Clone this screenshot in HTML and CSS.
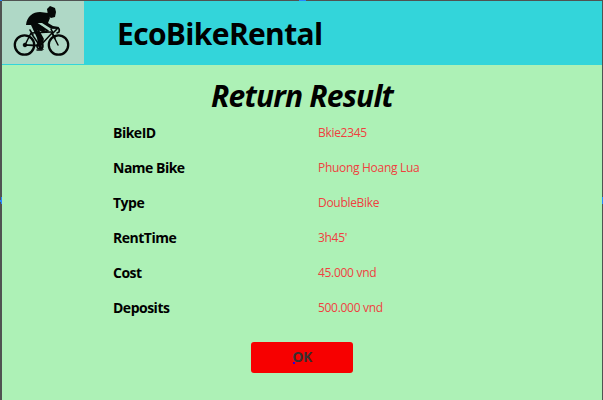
FILE: index.html
```html
<!DOCTYPE html>
<html lang="en">
<head>
<meta charset="utf-8">
<title>EcoBikeRental</title>
<link rel="stylesheet" href="styles.css">
</head>
<body>
<main class="window">
  <i class="handle top-left"></i><i class="handle top"></i><i class="handle left"></i><i class="handle left-tick"></i><i class="handle right"></i>
  <header class="header">
    <div class="logo">
      <svg viewBox="0 0 82 63" width="82" height="63" fill="none" stroke="#050807" stroke-linecap="round" stroke-linejoin="round">
        <g stroke-width="2.3"><circle cx="22.5" cy="44" r="9.7"/><circle cx="56.5" cy="44" r="9.7"/></g>
        <path stroke-width="1.5" d="M23 44l6-12 9 13zM38 45l12-13 6 12M29 32l20-1M28 29l3 5"/>
        <path stroke-width="1.6" d="M49 28l2 4 4-4M50 27h6q2 1 1 4l-2 1M50 32l3 5"/>
        <path stroke-width="1" d="M23 44h14"/>
        <circle cx="23" cy="44" r="1.8" fill="#050807"/><circle cx="38" cy="45" r="3" stroke-width="1.5"/>
        <path stroke-width="1.5" d="M35 49h5"/>
        <path fill="#050807" stroke="none" d="M24 24C25 15 31 11 38 11l8 1 2 5-2 5 5 3 6 1-1 2-8-1-8-5-6 0 7 4 3 3-3 2-6-2 6 8-2 8 3 4-5-1-2-11-6-13z"/>
        <path stroke-width="1.7" d="M34 22l12 8-6 1M36 29l5 9-1 8"/>
        <path fill="#050807" stroke="none" d="M45 8l3-3 5 2 1 4-1 5-4 1-3-2z"/>
      </svg>
    </div>
    <h1 class="brand">EcoBikeRental</h1>
  </header>
  <section class="content">
    <h2 class="title">Return Result</h2>
    <dl class="details">
      <dt>BikeID</dt><dd>Bkie2345</dd>
      <dt>Name Bike</dt><dd>Phuong Hoang Lua</dd>
      <dt>Type</dt><dd>DoubleBike</dd>
      <dt>RentTime</dt><dd>3h45'</dd>
      <dt>Cost</dt><dd>45.000 vnd</dd>
      <dt>Deposits</dt><dd>500.000 vnd</dd>
    </dl>
    <button class="ok">OK</button>
  </section>
</main>
</body>
</html>
```
FILE: styles.css
```css
* { box-sizing: border-box; }
body { margin: 0; font-family: "Open Sans", "Noto Sans", sans-serif; }
.window {
  position: relative;
  height: 400px;
  border: solid #505352;
  border-width: 1px 1px 0 2px;
  background: #adf1b6;
}
.header { display: flex; height: 64px; background: #33d5da; }
.logo { width: 82px; height: 63px; background: #afd8c6; }
.logo svg { display: block; }
.brand { margin: 11px 0 0 33px; font-size: 30px; line-height: 44px; letter-spacing: -0.65px; color: #000; }
.content { display: flex; flex-direction: column; }
.title { margin: 9px 0 0 209px; font-size: 30px; line-height: 44px; font-style: italic; letter-spacing: -0.8px; white-space: nowrap; color: #000; }
.details { display: grid; grid-template-columns: 205px 1fr; grid-auto-rows: 35px; margin: -3px 0 0 111px; align-items: center; }
.details dt { font-size: 14px; font-weight: 700; line-height: 20px; letter-spacing: -0.5px; color: #000; }
.details dd { margin: 0; font-size: 12px; line-height: 20px; letter-spacing: -0.3px; color: #f0403f; }
.ok { width: 102px; height: 31px; margin: 17px 0 0 249px; padding: 0 0 2px; border: 0; border-radius: 3px; background: #f70000; color: #38302f; font: 700 14px/20px "Open Sans", sans-serif; letter-spacing: -0.5px; position: relative; }
.ok::after { content: ""; position: absolute; left: 42px; top: 20px; width: 2px; height: 2px; background: #2800d8; }
.handle { position: absolute; background: #2685ff; }
.top-left { left: -2px; top: -1px; width: 2px; height: 1px; }
.top { left: 297px; top: -1px; width: 7px; height: 1px; }
.left { left: -1px; top: 196px; width: 1px; height: 7px; }
.left-tick { left: -2px; top: 199px; width: 1px; height: 2px; }
.right { right: -1px; top: 196px; width: 1px; height: 7px; }
```
